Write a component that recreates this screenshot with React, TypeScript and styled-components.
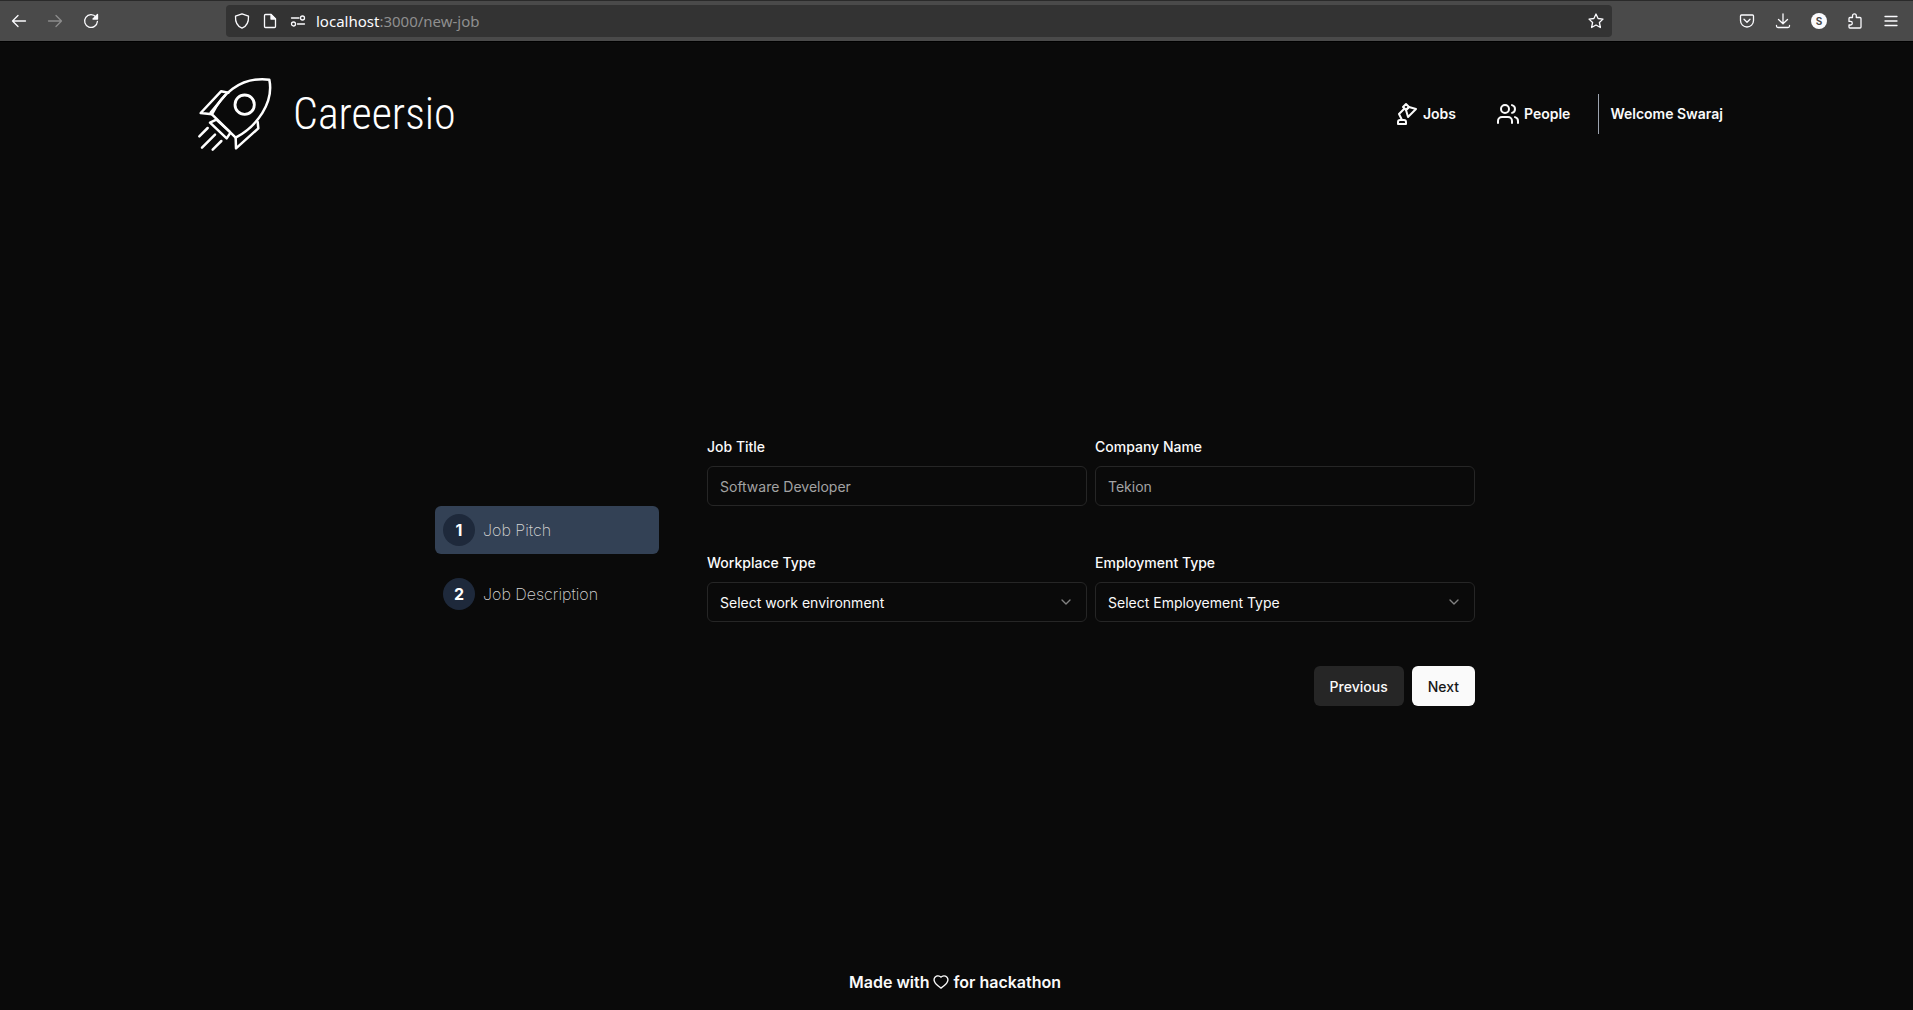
import React from "react";
import styled, { createGlobalStyle } from "styled-components";
import { ChevronDown, Users } from "lucide-react";
import { AiOutlineHeart } from "react-icons/ai";

const GlobalStyle = createGlobalStyle`
  *, *::before, *::after { box-sizing: border-box; }
  body {
    margin: 0;
    background: #0a0a0a;
    color: #fafafa;
    font-family: Inter, "Liberation Sans", sans-serif;
    font-size: 14px;
    line-height: 20px;
  }
  button, input, select { font: inherit; color: inherit; }
`;

const Screen = styled.div`
  min-height: 100vh;
  display: flex;
  flex-direction: column;
`;

const Toolbar = styled.div`
  height: 42px;
  flex: none;
  display: flex;
  align-items: center;
  padding: 0 4px 0 1px;
  background: #4a4a4a;
  border-top: 1px solid #2a2a2a;
  border-bottom: 1px solid #000;
`;

const ToolButton = styled.button<{ $dim?: boolean }>`
  width: 36px;
  height: 32px;
  padding: 0;
  border: 0;
  background: none;
  display: grid;
  place-items: center;
  color: ${(p) => (p.$dim ? "#8c8c8c" : "#fbfbfe")};
`;

const AddressBar = styled.div`
  flex: 1;
  height: 32px;
  margin: 0 117px;
  padding: 0 2px;
  display: flex;
  align-items: center;
  border-radius: 4px;
  background: #333333;
`;

const AddressButton = styled(ToolButton)`
  width: 28px;
`;

const Url = styled.div`
  flex: 1;
  padding-left: 4px;
  font-family: "Noto Sans", "Open Sans", sans-serif;
  font-size: 15px;
  color: #8f8f8f;
`;

const Host = styled.span`
  color: #fbfbfe;
`;

const Page = styled.div`
  flex: 1;
  display: flex;
  flex-direction: column;
  align-items: center;
  padding-right: 3px;
`;

const Header = styled.header`
  width: 100%;
  max-width: 1536px;
  height: 144px;
  display: flex;
  align-items: center;
  justify-content: space-between;
`;

const Brand = styled.a`
  display: flex;
  align-items: center;
  gap: 16px;
  color: #fff;
  text-decoration: none;
`;

const Wordmark = styled.span`
  font-family: "Roboto Condensed", Roboto, sans-serif;
  font-weight: 300;
  font-size: 44px;
  line-height: 64px;
`;

const Nav = styled.nav`
  display: flex;
  align-items: center;
`;

const NavLink = styled.a`
  display: flex;
  align-items: center;
  gap: 4px;
  margin-right: 40px;
  color: inherit;
  font-weight: 600;
  text-decoration: none;

  &:last-of-type { margin-right: 28px; }
`;

const Welcome = styled.span`
  height: 40px;
  display: flex;
  align-items: center;
  padding-left: 11px;
  border-left: 1px solid #9ca3af;
  font-weight: 600;
`;

const Main = styled.main`
  flex: 1;
  width: 100%;
  max-width: 1040px;
  display: grid;
  grid-template-columns: 224px 1fr;
  column-gap: 48px;
  align-items: center;
`;

const Steps = styled.ol`
  list-style: none;
  margin: 0;
  padding: 0 0 16px;
  display: flex;
  flex-direction: column;
  gap: 16px;
`;

const Step = styled.li<{ $active?: boolean }>`
  height: 48px;
  display: flex;
  align-items: center;
  gap: 8px;
  padding: 0 8px;
  border-radius: 6px;
  background: ${(p) => (p.$active ? "#334155" : "transparent")};
  color: #d4d4d4;
  font-size: 16px;
  line-height: 24px;
  font-weight: 200;
`;

const StepNumber = styled.span`
  width: 32px;
  height: 32px;
  display: grid;
  place-items: center;
  border-radius: 50%;
  background: #1e293b;
  color: #fff;
  font-weight: 700;
`;

const Form = styled.form`
  display: flex;
  flex-direction: column;
  gap: 44px;
`;

const FieldRow = styled.div`
  display: grid;
  grid-template-columns: 1fr 1fr;
  gap: 8px;
`;

const Field = styled.div`
  display: flex;
  flex-direction: column;
  gap: 8px;
`;

const Label = styled.label`
  padding-top: 2px;
  font-weight: 500;
  line-height: 22px;
`;

const Input = styled.input`
  width: 100%;
  height: 40px;
  padding: 0 12px;
  border: 1px solid #262626;
  border-radius: 6px;
  background: #0a0a0a;

  &::placeholder { color: #a3a3a3; opacity: 1; }
`;

const SelectBox = styled.div`
  display: grid;
  align-items: center;

  > * { grid-area: 1 / 1; }
  > svg {
    justify-self: end;
    margin-right: 13px;
    opacity: 0.5;
    pointer-events: none;
  }
`;

const Select = styled.select`
  width: 100%;
  height: 40px;
  padding: 2px 12px 0;
  border: 1px solid #262626;
  border-radius: 6px;
  background: #0a0a0a;
  appearance: none;
`;

const Actions = styled.div`
  display: flex;
  justify-content: flex-end;
  gap: 8px;
`;

const Button = styled.button<{ $primary?: boolean }>`
  height: 40px;
  padding: 2px 16px 0;
  border: 0;
  border-radius: 6px;
  font-weight: 500;
  background: ${(p) => (p.$primary ? "#fafafa" : "#262626")};
  color: ${(p) => (p.$primary ? "#171717" : "#fafafa")};
`;

const Footer = styled.footer`
  height: 56px;
  display: flex;
  align-items: center;
  gap: 3px;
  font-size: 16px;
  line-height: 24px;
  font-weight: 600;
`;

type GlyphProps = { children: React.ReactNode; size?: number };

const Glyph = ({ children, size = 16 }: GlyphProps) => (
  <svg
    width={size}
    height={size}
    viewBox="0 0 16 16"
    fill="none"
    stroke="currentColor"
    strokeWidth="1.3"
    strokeLinecap="round"
    strokeLinejoin="round"
    aria-hidden="true"
  >
    {children}
  </svg>
);

const Rocket = () => (
  <svg
    width="90"
    height="90"
    viewBox="-9 -3 270 270"
    fill="none"
    stroke="currentColor"
    strokeWidth="7.5"
    strokeLinecap="round"
    strokeLinejoin="round"
    aria-hidden="true"
  >
    <path d="M66 133C92 78 148 18 238 29C252 98 202 168 137 203Z" />
    <circle cx="164" cy="104" r="29" strokeWidth="8.5" />
    <path d="M115 68L93 64L32 129L66 133" />
    <path d="M106 75L62 128" />
    <path d="M203 156L205 175L138 235L137 203" />
    <path d="M79 149L60 158L110 205L120 190" />
    <path d="M79 149L118 184" />
    <path d="M53 174L28 199M75 194L36 233M94 213L68 239" />
  </svg>
);

const DeskLamp = () => (
  <svg
    width="24"
    height="24"
    viewBox="0 0 24 24"
    fill="none"
    stroke="currentColor"
    strokeWidth="2"
    strokeLinecap="round"
    strokeLinejoin="round"
    aria-hidden="true"
  >
    <path d="m14 5-3 3 2 7 8-8-7-2Z" />
    <path d="m14 5-3 3-3-3 3-3 3 3Z" />
    <path d="M9.500 6.500 4 12l3 6" />
    <path d="M3 22v-2a2 2 0 0 1 2-2h4a2 2 0 0 1 2 2v2H3Z" />
  </svg>
);

const BrowserToolbar = () => (
  <Toolbar>
    <ToolButton aria-label="Back">
      <Glyph><path d="M14.500 8H1.500M7 2.500L1.500 8L7 13.500" /></Glyph>
    </ToolButton>
    <ToolButton aria-label="Forward" $dim>
      <Glyph><path d="M1.500 8H14.500M9 2.500L14.500 8L9 13.500" /></Glyph>
    </ToolButton>
    <ToolButton aria-label="Reload">
      <Glyph>
        <path d="M13 4A6.400 6.400 0 1 0 14.400 8.500" />
        <path d="M14.500 1.500V6H10Z" fill="currentColor" />
      </Glyph>
    </ToolButton>
    <AddressBar>
      <AddressButton aria-label="Tracking protection">
        <Glyph><path d="M8 .8L14.500 3.200C14.800 9 12.500 13.300 8 15.200C3.500 13.300 1.200 9 1.500 3.200Z" /></Glyph>
      </AddressButton>
      <AddressButton aria-label="Site information">
        <Glyph>
          <path d="M3.500 1.500H9L13.500 6V13.500Q13.500 14.500 12.500 14.500H3.500Q2.500 14.500 2.500 13.500V2.500Q2.500 1.500 3.500 1.500Z" />
          <path d="M9 1.500V6H13.500Z" fill="currentColor" />
        </Glyph>
      </AddressButton>
      <AddressButton aria-label="Permissions">
        <Glyph>
          <path d="M1.500 5H9M7.500 11H14.500" />
          <circle cx="12.500" cy="5" r="2" />
          <circle cx="3.500" cy="11" r="2" />
        </Glyph>
      </AddressButton>
      <Url role="textbox" aria-label="Address" tabIndex={0}>
        <Host>localhost</Host>:3000/new-job
      </Url>
      <AddressButton aria-label="Bookmark this page">
        <Glyph><path d="M8 1L10.100 5.500L15 6.100L11.400 9.500L12.400 14.500L8 12L3.600 14.500L4.600 9.500L1 6.100L5.900 5.500Z" /></Glyph>
      </AddressButton>
    </AddressBar>
    <ToolButton aria-label="Save to Pocket">
      <Glyph>
        <path d="M2.500 2H13.500Q14.500 2 14.500 3V7.500A6.500 6.500 0 0 1 1.500 7.500V3Q1.500 2 2.500 2Z" />
        <path d="M5 6.200L8 9.200L11 6.200" />
      </Glyph>
    </ToolButton>
    <ToolButton aria-label="Downloads">
      <Glyph><path d="M8 .8V10.500M3.500 6.500L8 10.800L12.500 6.500M1.500 12.500V13Q1.500 14.500 3 14.500H13Q14.500 14.500 14.500 13V12.500" /></Glyph>
    </ToolButton>
    <ToolButton aria-label="Account">
      <AccountBadge>S</AccountBadge>
    </ToolButton>
    <ToolButton aria-label="Extensions">
      <Glyph><path d="M2 7V5.500Q2 4.500 3 4.500H5.500V2.700A1.900 1.900 0 0 1 9.300 2.700V4.500H13Q14 4.500 14 5.500V14Q14 15 13 15H3Q2 15 2 14V12H3.500A1.800 1.800 0 0 0 3.500 8.400H2Z" /></Glyph>
    </ToolButton>
    <ToolButton aria-label="Menu">
      <Glyph><path d="M2 3.500H14M2 8H14M2 12.500H14" /></Glyph>
    </ToolButton>
  </Toolbar>
);

const AccountBadge = styled.span`
  width: 16px;
  height: 16px;
  border-radius: 50%;
  background: #fbfbfe;
  color: #4a4a4a;
  font-size: 10px;
  line-height: 16px;
  font-weight: 700;
`;

const textFields = [
  { id: "job-title", label: "Job Title", placeholder: "Software Developer" },
  { id: "company-name", label: "Company Name", placeholder: "Tekion" },
];

const selectFields = [
  { id: "workplace-type", label: "Workplace Type", prompt: "Select work environment" },
  { id: "employment-type", label: "Employment Type", prompt: "Select Employement Type" },
];

const steps = ["Job Pitch", "Job Description"];

export default function App() {
  return (
    <Screen>
      <GlobalStyle />
      <BrowserToolbar />
      <Page>
        <Header>
          <Brand href="#">
            <Rocket />
            <Wordmark>Careersio</Wordmark>
          </Brand>
          <Nav>
            <NavLink href="#jobs"><DeskLamp />Jobs</NavLink>
            <NavLink href="#people"><Users size={24} />People</NavLink>
            <Welcome>Welcome Swaraj</Welcome>
          </Nav>
        </Header>
        <Main>
          <Steps>
            {steps.map((name, i) => (
              <Step key={name} $active={i === 0}>
                <StepNumber>{i + 1}</StepNumber>
                {name}
              </Step>
            ))}
          </Steps>
          <Form onSubmit={(e) => e.preventDefault()}>
            <FieldRow>
              {textFields.map((f) => (
                <Field key={f.id}>
                  <Label htmlFor={f.id}>{f.label}</Label>
                  <Input id={f.id} type="text" placeholder={f.placeholder} />
                </Field>
              ))}
            </FieldRow>
            <FieldRow>
              {selectFields.map((f) => (
                <Field key={f.id}>
                  <Label htmlFor={f.id}>{f.label}</Label>
                  <SelectBox>
                    <Select id={f.id}>
                      <option>{f.prompt}</option>
                    </Select>
                    <ChevronDown size={16} />
                  </SelectBox>
                </Field>
              ))}
            </FieldRow>
            <Actions>
              <Button type="button">Previous</Button>
              <Button type="submit" $primary>Next</Button>
            </Actions>
          </Form>
        </Main>
        <Footer>
          Made with <AiOutlineHeart size={18} aria-label="love" /> for hackathon
        </Footer>
      </Page>
    </Screen>
  );
}
